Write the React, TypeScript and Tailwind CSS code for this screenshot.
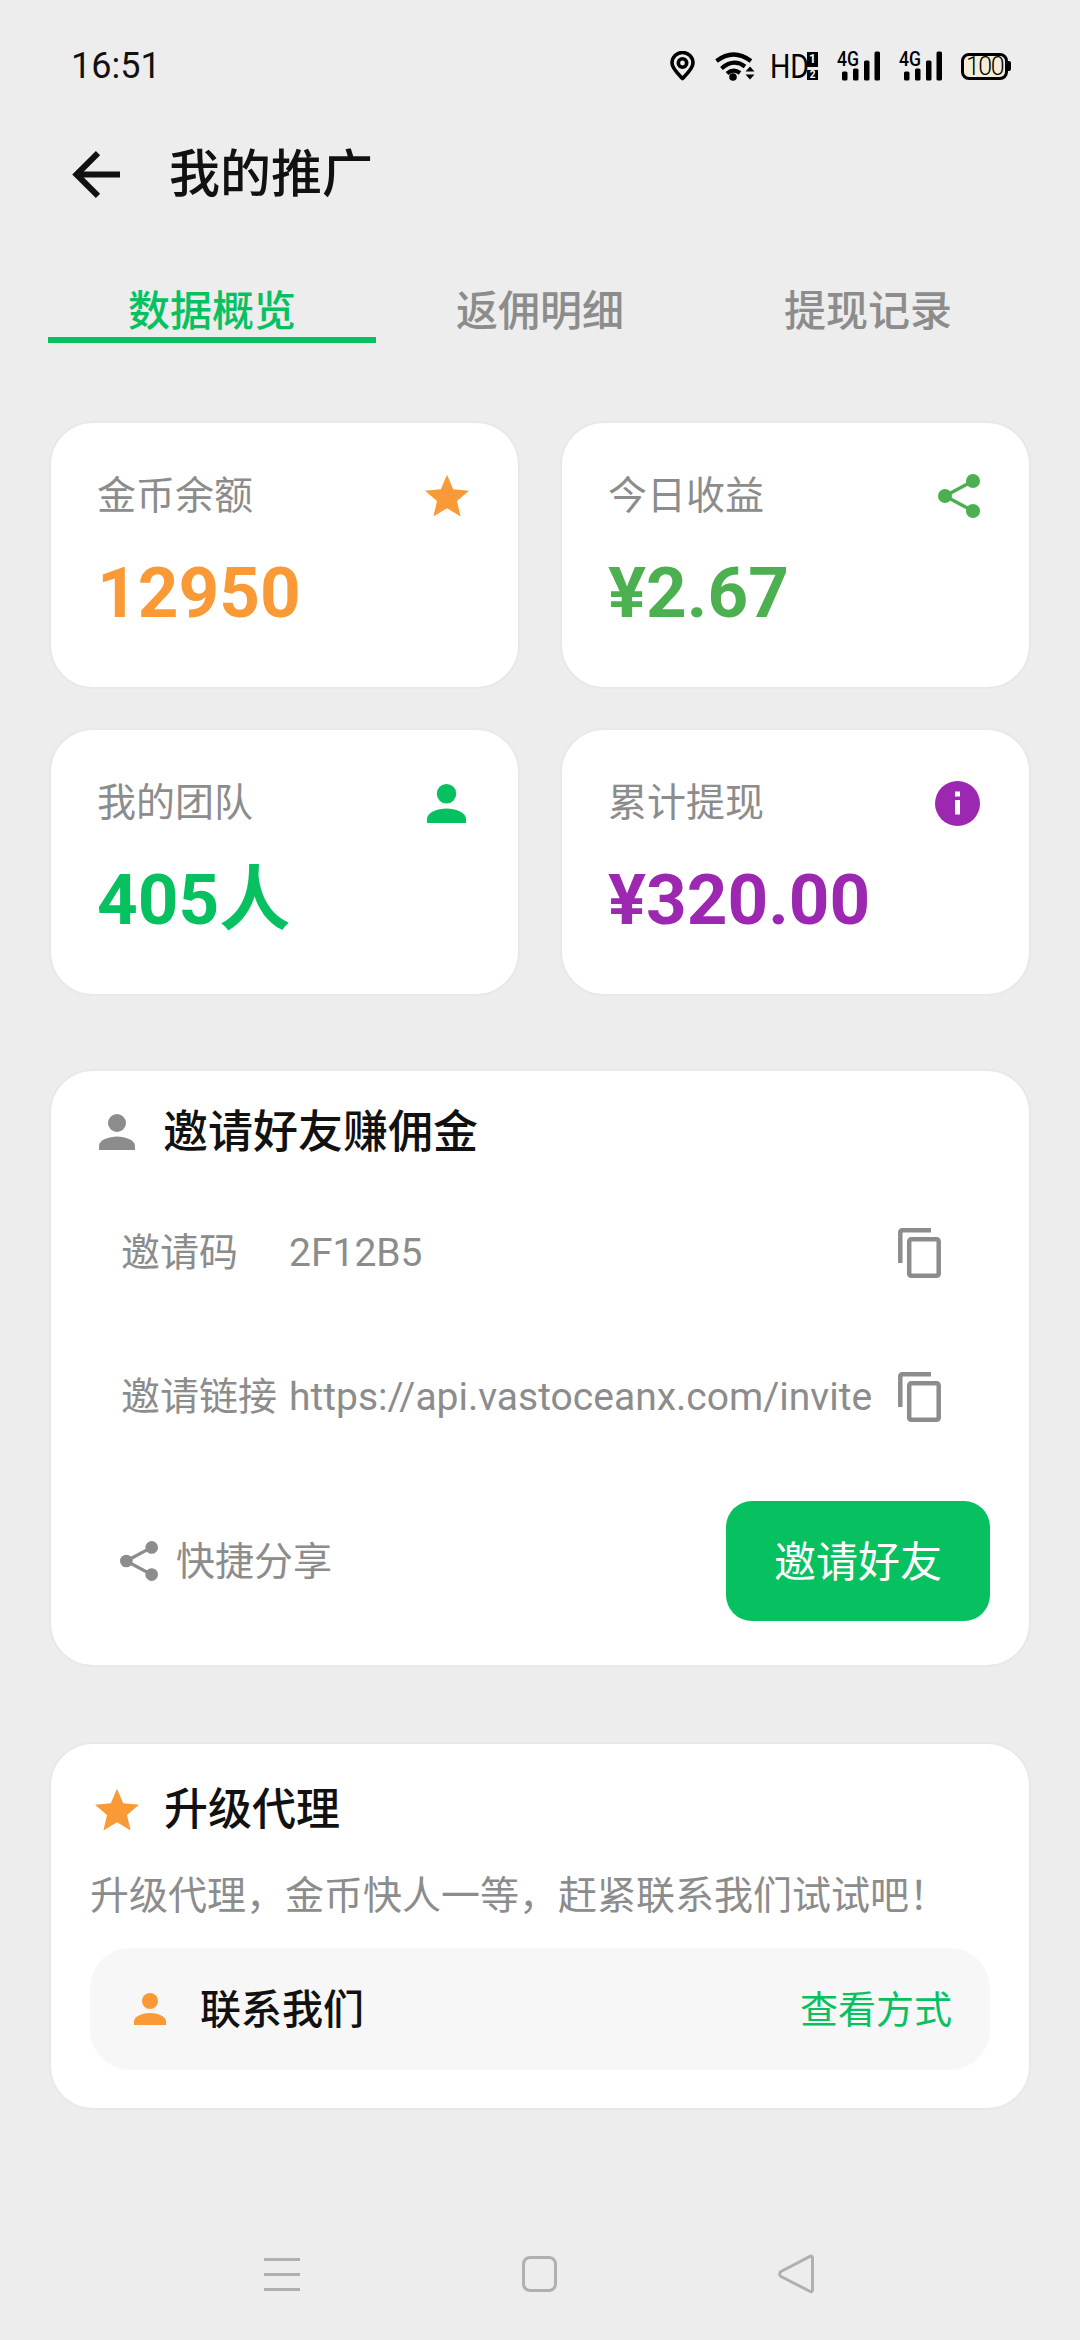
const GREEN = "#07c160";

function Person({ color, size }: { color: string; size: number }) {
  return (
    <svg width={size} height={size} viewBox="0 0 36 36" fill={color}>
      <circle cx="18" cy="9" r="9" />
      <path d="M0 36v-4c0-6 10-9.5 18-9.5S36 26 36 32v4z" />
    </svg>
  );
}

function Star({ color, size }: { color: string; size: number }) {
  return (
    <svg width={size} height={size} viewBox="2 2 20 19.3" fill={color}>
      <path d="M12 17.27 18.18 21l-1.64-7.03L22 9.24l-7.19-.61L12 2 9.19 8.63 2 9.24l5.46 4.73L5.82 21z" />
    </svg>
  );
}

function Share({ color, width, height }: { color: string; width: number; height: number }) {
  return (
    <svg width={width} height={height} viewBox="0 0 42 44" fill={color} stroke={color}>
      <line x1="7" y1="22" x2="35" y2="7" strokeWidth="3.5" />
      <line x1="7" y1="22" x2="35" y2="37" strokeWidth="3.5" />
      <circle cx="7" cy="22" r="7" stroke="none" />
      <circle cx="35" cy="7" r="7" stroke="none" />
      <circle cx="35" cy="37" r="7" stroke="none" />
    </svg>
  );
}

function Info({ color }: { color: string }) {
  return (
    <svg width="45" height="45" viewBox="0 0 45 45">
      <circle cx="22.5" cy="22.5" r="22.5" fill={color} />
      <rect x="20" y="10.5" width="5" height="5" fill="#fff" />
      <rect x="20" y="19" width="5" height="14.5" fill="#fff" />
    </svg>
  );
}

function Copy() {
  return (
    <svg width="43" height="50" viewBox="0 0 43 50" fill="none" stroke="#8c8c8c" strokeWidth="4.5">
      <path d="M2.3 35V4a1.7 1.7 0 0 1 1.7-1.7h29" />
      <rect x="11.2" y="11.2" width="29.5" height="36.5" rx="2" />
    </svg>
  );
}

function Signal() {
  return (
    <svg width="44" height="30" viewBox="0 0 44 30" fill="#000">
      <text x="1" y="15" fontSize="20" fontWeight="500" fontFamily="Roboto, sans-serif" textLength="22" lengthAdjust="spacingAndGlyphs">
        4G
      </text>
      <rect x="6" y="20.500" width="5.500" height="9" rx="1.500" />
      <rect x="17" y="17.500" width="5.500" height="12" rx="1.500" />
      <rect x="28" y="9.500" width="5.500" height="20" rx="1.500" />
      <rect x="38.500" y="0.500" width="5.500" height="29" rx="1.500" />
    </svg>
  );
}

function StatusBar() {
  return (
    <div className="flex h-[132px] items-center justify-between pl-[71px] pr-[69px]">
      <span className="text-[36px] leading-none text-[#111]">16:51</span>
      <div className="flex items-center">
        <svg width="25" height="30" viewBox="0 0 25 30" fill="none" stroke="#000" strokeWidth="3.6">
          <path d="M12.500 27.500C8 22.500 2 17.500 2 12a10.500 10.500 0 0 1 21 0c0 5.500-6 10.500-10.500 15.500z" strokeLinejoin="round" />
          <circle cx="12.500" cy="12" r="4.200" />
        </svg>
        <svg className="ml-[20px]" width="40" height="30" viewBox="0 0 40 30" fill="none" stroke="#000" strokeWidth="4.200">
          <path d="M1.500 10Q18.500-3 36 10" />
          <path d="M6.500 17.500Q18.500 7 30 15.500" />
          <path d="M12 22.500Q18.500 17 25 22" />
          <circle cx="18" cy="26" r="3.800" fill="#000" stroke="none" />
          <path d="M35 15.500l4.500 5h-9zM35 28.500l4.500-5h-9z" fill="#000" stroke="none" />
        </svg>
        <div className="ml-[15px] flex items-center">
          <span className="w-[37px] origin-left scale-x-[0.84] text-[34px] leading-none whitespace-nowrap text-black">HD</span>
          <div className="flex w-[11px] flex-col gap-[3px]">
            <span className="h-[15px] bg-black text-center text-[12px] leading-[15px] font-bold text-white">1</span>
            <span className="h-[10px] bg-black text-center text-[10px] leading-[10px] font-bold text-white">2</span>
          </div>
        </div>
        <div className="ml-[18px]">
          <Signal />
        </div>
        <div className="ml-[18px]">
          <Signal />
        </div>
        <div className="ml-[19px] flex items-center">
          <div className="flex h-[27px] w-[47px] items-center justify-center rounded-[8px] border-[3px] border-black bg-[#f3ecd6] text-[25px] leading-none font-light tracking-[-1.5px] text-black">
            100
          </div>
          <div className="h-[10px] w-[3px] rounded-r-[2px] bg-black" />
        </div>
      </div>
    </div>
  );
}

function StatCard({ label, value, color, icon }: { label: string; value: string; color: string; icon: React.ReactNode }) {
  return (
    <div className="h-[268px] rounded-[44px] border-2 border-[#e8e8e8] bg-white pt-[50px] pr-[49px] pl-[46px]">
      <div className="flex h-[46px] items-center justify-between">
        <span className="text-[39px] leading-none text-[#8c8c8c]">{label}</span>
        {icon}
      </div>
      <div className="mt-[32px] text-[71px] leading-[84px] font-bold" style={{ color }}>
        {value}
      </div>
    </div>
  );
}

function InviteRow({ label, value, className }: { label: string; value: string; className: string }) {
  return (
    <div className={`flex h-[100px] items-center pr-[88px] pl-[70px] text-[39px] leading-none text-[#8c8c8c] ${className}`}>
      <span className="w-[168px] shrink-0">{label}</span>
      <span className="flex-1 whitespace-nowrap">{value}</span>
      <Copy />
    </div>
  );
}

export default function App() {
  return (
    <div className="flex h-[2340px] w-[1080px] flex-col overflow-hidden bg-[#ededed] font-[Roboto,'Noto_Sans_CJK_SC',sans-serif]">
      <StatusBar />

      <div className="flex h-[84px] items-center pl-[72px]">
        <svg width="48" height="47" viewBox="0 0 48 47" fill="none" stroke="#111" strokeWidth="6">
          <path d="M48 23.500H5" />
          <path d="M26 2.200L4.500 23.500 26 44.800" />
        </svg>
        <span className="ml-[49px] text-[51px] leading-none font-medium text-[#111]">我的推广</span>
      </div>

      <div className="mt-[64px] grid grid-cols-3 px-[48px]">
        <div className="h-[63px] border-b-[6px] border-[#07c160] text-center text-[42px] leading-[63px] font-medium text-[#07c160]">
          数据概览
        </div>
        <div className="h-[63px] text-center text-[42px] leading-[63px] font-medium text-[#8c8c8c]">返佣明细</div>
        <div className="h-[63px] text-center text-[42px] leading-[63px] font-medium text-[#8c8c8c]">提现记录</div>
      </div>

      <div className="mt-[78px] grid grid-cols-2 gap-x-[40px] gap-y-[39px] px-[49px]">
        <StatCard label="金币余额" value="12950" color="#f99a37" icon={<Star color="#f99a37" size={44} />} />
        <StatCard label="今日收益" value="¥2.67" color="#4caf50" icon={<Share color="#4caf50" width={42} height={44} />} />
        <StatCard
          label="我的团队"
          value="405人"
          color={GREEN}
          icon={
            <div className="mr-[3px]">
              <Person color={GREEN} size={39} />
            </div>
          }
        />
        <StatCard label="累计提现" value="¥320.00" color="#9c27b0" icon={<Info color="#9c27b0" />} />
      </div>

      <div className="mx-[49px] mt-[73px] h-[598px] rounded-[44px] border-2 border-[#e8e8e8] bg-white pt-[31px]">
        <div className="flex h-[60px] items-center gap-[28px] pl-[48px]">
          <Person color="#8c8c8c" size={36} />
          <span className="text-[45px] leading-none font-medium text-[#111]">邀请好友赚佣金</span>
        </div>
        <InviteRow className="mt-[41px]" label="邀请码" value="2F12B5" />
        <InviteRow className="mt-[44px]" label="邀请链接" value="https://api.vastoceanx.com/invite" />
        <div className="mt-[54px] flex items-center justify-between pr-[39px] pl-[69px]">
          <div className="flex items-center gap-[18px]">
            <Share color="#8c8c8c" width={38} height={40} />
            <span className="pt-[2px] text-[39px] leading-none text-[#8c8c8c]">快捷分享</span>
          </div>
          <div className="flex h-[120px] w-[264px] items-center justify-center rounded-[26px] bg-[#07c160] pt-[3px] text-[42px] leading-none text-white">
            邀请好友
          </div>
        </div>
      </div>

      <div className="mx-[49px] mt-[75px] h-[368px] rounded-[44px] border-2 border-[#e8e8e8] bg-white px-[39px] pt-[36px]">
        <div className="flex h-[60px] items-center gap-[25px] pl-[5px]">
          <Star color="#f99a37" size={44} />
          <span className="text-[44px] leading-none font-medium text-[#111]">升级代理</span>
        </div>
        <div className="mt-[26px] text-[39px] leading-[60px] whitespace-nowrap text-[#8c8c8c]">
          升级代理，金币快人一等，赶紧联系我们试试吧！
        </div>
        <div className="mt-[22px] flex h-[122px] items-center rounded-[40px] bg-[#f7f7f7] pr-[38px] pl-[44px]">
          <Person color="#f99a37" size={32} />
          <span className="ml-[34px] flex-1 pt-[3px] text-[41px] leading-none font-medium text-[#111]">联系我们</span>
          <span className="pt-[2px] text-[38px] leading-none text-[#07c160]">查看方式</span>
        </div>
      </div>

      <div className="mt-auto mb-[46px] flex h-[40px] items-center justify-between pr-[266px] pl-[264px]">
        <div className="flex w-[36px] flex-col gap-[12px]">
          <div className="h-[3px] bg-[#b0b0b0]" />
          <div className="h-[3px] bg-[#b0b0b0]" />
          <div className="h-[3px] bg-[#b0b0b0]" />
        </div>
        <div className="h-[36px] w-[35px] rounded-[8px] border-[3px] border-[#b0b0b0]" />
        <svg width="36" height="40" viewBox="0 0 36 40" fill="none" stroke="#b0b0b0" strokeWidth="3" strokeLinejoin="round">
          <path d="M32.500 2.200a1.500 1.500 0 0 1 2 1.500v32.600a1.500 1.500 0 0 1-2.300 1.200L3 22.500a3 3 0 0 1 0-5z" />
        </svg>
      </div>
    </div>
  );
}
